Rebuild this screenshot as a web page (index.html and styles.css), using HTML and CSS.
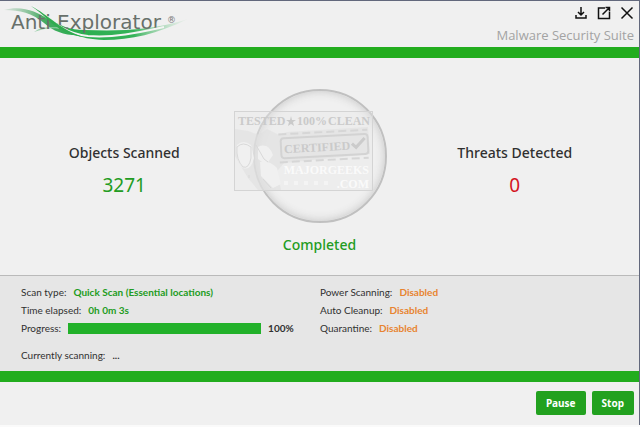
FILE: index.html
```html
<!DOCTYPE html>
<html lang="en">
<head>
<meta charset="utf-8">
<title>Anti Explorator</title>
<link rel="stylesheet" href="styles.css">
</head>
<body>
<div class="window">
  <header class="header">
    <svg class="logo" width="192" height="42" viewBox="0 0 192 42" role="img" aria-label="Anti Explorator">
      <defs>
        <linearGradient id="fade-in" x1="0" x2="1">
          <stop offset="0" stop-color="#8fbc9d" stop-opacity=".25"/>
          <stop offset=".5" stop-color="#45ac62"/>
          <stop offset="1" stop-color="#2aad4e"/>
        </linearGradient>
        <linearGradient id="fade-out" x1="0" x2="1">
          <stop offset="0" stop-color="#26ad4b"/>
          <stop offset=".6" stop-color="#35b258"/>
          <stop offset="1" stop-color="#b5dcc0" stop-opacity=".1"/>
        </linearGradient>
      </defs>
      <path d="M4 9C22 4 37 11 48 18C61 27 68 31 82 34C66 35 54 31 44 22C32 12 20 9 4 9Z" fill="url(#fade-in)"/>
      <path d="M34 31C43 24 50 27 61 26L66 29C53 26 45 27 34 31Z" fill="#9bd0aa"/>
      <path d="M52 20C62 25 70 29 84 29C118 30 150 30 188 18C157 33 131 39 104 39C78 38 66 31 52 20Z" fill="url(#fade-out)"/>
      <text class="logo-text" x="11" y="28">Anti Explorator</text>
      <path d="M33 5C49 17 62 32 88 35C113 37 137 32 164 26" fill="none" stroke="#f4f4f4" stroke-width="2"/>
      <path d="M31 5C49 14 60 29 84 36C67 34 57 27 48 19C42 13 37 9 31 5Z" fill="#30ac50"/>
      <text class="logo-mark" x="167" y="22">®</text>
    </svg>
    <div class="header-side">
      <div class="window-controls">
        <button class="icon-button" aria-label="Minimize">
          <svg width="14" height="14" viewBox="0 0 14 14"><path d="M7 1V9M4 6L7 9L10 6M2 9V12H12V9"/></svg>
        </button>
        <button class="icon-button" aria-label="Maximize">
          <svg width="14" height="14" viewBox="0 0 14 14"><path d="M8 2H1.500V12.500H12.500V6M5.500 8.500L12 2M8.500 1.500H12.500V5.500"/></svg>
        </button>
        <button class="icon-button" aria-label="Close">
          <svg width="14" height="14" viewBox="0 0 14 14"><path d="M1.500 1.500L12.500 12.500M12.500 1.500L1.500 12.500"/></svg>
        </button>
      </div>
      <div class="tagline">Malware Security Suite</div>
    </div>
  </header>
  <div class="band"></div>

  <main class="summary">
    <section class="stat">
      <h2 class="stat-title">Objects Scanned</h2>
      <div class="stat-value good">3271</div>
    </section>
    <section class="result">
      <div class="dial">
        <svg class="stamp" width="140" height="80" viewBox="0 0 140 80" aria-hidden="true">
          <rect class="stamp-frame" x=".5" y=".5" width="138" height="79"/>
          <path class="stamp-paint" d="M1 18L14 20L25 24L33 18L45 24L53 21L134 16L136 43L50 52L43 60L47 79H24L14 67L1 45Z"/>
          <path class="stamp-face" d="M3 34Q9 28 17 34L20 47Q17 60 9 57Q1 51 3 34M24 36Q34 31 39 44L32 54L24 48M26 51Q35 49 43 57L47 73L39 77L27 65Z"/>
          <path class="stamp-line" d="M3 36Q9 30 17 36V47Q15 58 9 56Q2 49 3 36M22 34L30 48L34 51M15 64V67M29 68L37 77"/>
          <text class="stamp-head" x="4" y="14">TESTED</text>
          <path class="stamp-star" d="M57 5L58 9H62L59 11L60 15L57 13L54 15L55 11L52 9H56Z"/>
          <text class="stamp-head" x="63" y="14">100%</text>
          <text class="stamp-head" x="136" y="14" text-anchor="end">CLEAN</text>
          <g transform="rotate(-3 91 35)">
            <path class="stamp-dash" d="M45 21H134M45 49H134"/>
            <rect class="stamp-box" x="47" y="25" width="87" height="20" rx="3"/>
            <text class="stamp-head" x="50" y="40">CERTIFIED</text>
            <path class="stamp-check" d="M118 34L122 38L131 29"/>
          </g>
          <text class="stamp-name" x="135" y="63" text-anchor="end">MAJORGEEKS</text>
          <text class="stamp-name" x="135" y="77" text-anchor="end">.COM</text>
          <path class="stamp-stars" d="M50 72H98"/>
        </svg>
      </div>
      <div class="result-text">Completed</div>
    </section>
    <section class="stat">
      <h2 class="stat-title">Threats Detected</h2>
      <div class="stat-value bad">0</div>
    </section>
  </main>

  <section class="details">
    <div class="column">
      <div class="row"><span>Scan type:</span><strong class="good">Quick Scan (Essential locations)</strong></div>
      <div class="row"><span>Time elapsed:</span><strong class="good">0h 0m 3s</strong></div>
      <div class="row"><label for="progress">Progress:</label><progress id="progress" class="progress" value="100" max="100"></progress><strong>100%</strong></div>
      <div class="row current"><span>Currently scanning:</span><strong>...</strong></div>
    </div>
    <div class="column">
      <div class="row"><span>Power Scanning:</span><strong class="off">Disabled</strong></div>
      <div class="row"><span>Auto Cleanup:</span><strong class="off">Disabled</strong></div>
      <div class="row"><span>Quarantine:</span><strong class="off">Disabled</strong></div>
    </div>
  </section>
  <div class="band"></div>

  <footer class="footer">
    <button class="button">Pause</button>
    <button class="button">Stop</button>
  </footer>
</div>
</body>
</html>
```
FILE: styles.css
```css
* { box-sizing: border-box; }

body {
  margin: 0;
  background: #fafafa;
  color: #303030;
  font-family: "Noto Sans", "Open Sans", sans-serif;
}

.window {
  display: flex;
  flex-direction: column;
  min-height: calc(100vh - 2px);
  background: #f0f0f0;
  border-top: 1px solid #62687c;
  border-right: 1px solid #62687c;
}

.header {
  display: flex;
  justify-content: space-between;
  height: 46px;
}

.logo { display: block; }
.logo-text { font: 20px "DejaVu Sans", sans-serif; fill: #68706b; }
.logo-mark { font: 9px "DejaVu Sans", sans-serif; fill: #777; }

.header-side {
  display: flex;
  flex-direction: column;
  align-items: flex-end;
  padding: 5px 5px 0 0;
}

.window-controls { display: flex; gap: 9px; }

.icon-button {
  display: block;
  padding: 0;
  border: 0;
  background: none;
  height: 14px;
}

.icon-button svg {
  display: block;
  fill: none;
  stroke: #111;
  stroke-width: 1.500;
}

.tagline {
  margin-top: 6px;
  color: #a3a3a3;
  font-family: "Open Sans", sans-serif;
  font-size: 13px;
  line-height: 18px;
}

.band {
  height: 11px;
  background: #22ad1e;
}

.summary {
  display: grid;
  grid-template-columns: 1fr 142px 1fr;
  padding: 31px 0 0;
  height: 217px;
}

.stat {
  padding-top: 54px;
  text-align: center;
}

.stat-title {
  margin: 0;
  font-size: 14px;
  font-weight: 500;
  line-height: 20px;
}

.stat-value {
  margin-top: 8px;
  font-size: 19px;
  line-height: 28px;
}

.good { color: #229c22; }
.bad { color: #d4141f; }
.off { color: #e88430; }

.result { text-align: center; }

.dial {
  position: relative;
  width: 134px;
  height: 134px;
  margin: 0 auto;
  border: 2px solid #c0c0c0;
  border-radius: 50%;
  box-shadow: inset 0 0 10px #c4c4c4;
}

.stamp {
  position: absolute;
  left: -21px;
  top: 20px;
}

.stamp-frame { fill: #e9e9e9; fill-opacity: .4; stroke: #d4d4d4; }
.stamp-paint { fill: #e0e0e0; fill-opacity: .6; }
.stamp-face { fill: #f0f0f0; }
.stamp-line { fill: none; stroke: #d9d9d9; stroke-width: 1; }
.stamp-head { font: bold 12px "Liberation Serif", serif; fill: #cacaca; }
.stamp-star { fill: #cacaca; }
.stamp-box { fill: none; stroke: #d3d3d3; stroke-width: 2; }
.stamp-dash { stroke: #d6d6d6; stroke-width: 2; stroke-dasharray: 8 4; }
.stamp-check { fill: none; stroke: #cbcbcb; stroke-width: 3; }
.stamp-name { font: bold 12px "Liberation Serif", serif; fill: #fafafa; }
.stamp-stars { stroke: #f4f4f4; stroke-width: 4; stroke-dasharray: 4 6; }

.result-text {
  margin-top: 12px;
  color: #229c22;
  font-size: 14px;
  font-weight: 500;
  line-height: 20px;
}

.details {
  display: grid;
  grid-template-columns: 299px 1fr;
  padding: 7px 0 0 21px;
  height: 96px;
  border-top: 1px solid #bababa;
  background: #e6e6e6;
  font-family: Lato, sans-serif;
  font-size: 10px;
}

.row {
  display: flex;
  align-items: center;
  gap: 7px;
  height: 18px;
}

.current { margin-top: 9px; }

.progress {
  appearance: none;
  display: block;
  width: 193px;
  height: 11px;
  border: 0;
  background: #d0d0d0;
}

.progress::-webkit-progress-bar { background: #d0d0d0; }
.progress::-webkit-progress-value { background: #22b12a; }
.progress::-moz-progress-bar { background: #22b12a; }

.footer {
  display: flex;
  justify-content: flex-end;
  gap: 6px;
  padding: 9px 5px;
}

.button {
  height: 24px;
  padding: 0 10px;
  border: 0;
  border-radius: 2px;
  background: #22a11f;
  color: #fff;
  font: bold 10px "Noto Sans", sans-serif;
}
```
